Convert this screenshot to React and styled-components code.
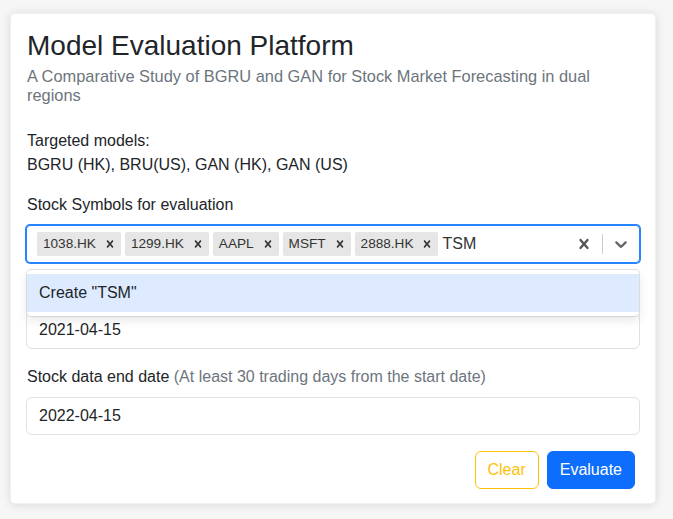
import React from "react";
import styled, { createGlobalStyle } from "styled-components";

const GlobalStyle = createGlobalStyle`
  html, body { margin: 0; padding: 0; }
  body {
    background: #f6f6f6;
    font-family: "Liberation Sans", Arial, sans-serif;
    color: #212529;
    font-size: 16px;
    line-height: 1.5;
  }
  * { box-sizing: border-box; }
`;

const Page = styled.div`
  padding: 13px 17px 15px 10px;
`;

const Card = styled.div`
  background: #fff;
  border-radius: 5px;
  border: 1px solid rgba(0, 0, 0, 0.06);
  box-shadow: 0 1px 10px rgba(0, 0, 0, 0.12);
  padding: 15px 15px 14px 15px;
`;

const Title = styled.h2`
  font-size: 28px;
  font-weight: 500;
  line-height: 1.2;
  margin: 0 0 8px 1px;
`;

const Subtitle = styled.h6`
  font-size: 16.4px;
  font-weight: 400;
  line-height: 1.2;
  color: #6c757d;
  margin: -4px 0 23px 1px;
`;

const Models = styled.div`
  margin: 0 0 16px 1px;
`;

const Field = styled.div`
  margin-bottom: 16px;
  position: relative;
`;

const Label = styled.label`
  display: block;
  margin: 0 0 8px 1px;
`;

const Hint = styled.span`
  color: #6c757d;
`;

const Control = styled.div`
  position: relative;
  display: flex;
  align-items: center;
  min-height: 38px;
  border: 1px solid #2684ff;
  box-shadow: 0 0 0 1px #2684ff;
  border-radius: 4px;
  background: #fff;
`;

const ValueContainer = styled.div`
  flex: 1;
  display: flex;
  flex-wrap: wrap;
  align-items: center;
  padding: 2px 8px;
`;

const Chip = styled.div`
  display: flex;
  margin: 2px;
  background: #e6e6e6;
  border-radius: 2px;
`;

const ChipLabel = styled.span`
  font-size: 13.6px;
  line-height: 18px;
  padding: 3px 3px 3px 6px;
  color: #333;
`;

const ChipRemove = styled.span`
  display: flex;
  align-items: center;
  padding: 0 4px;
  color: #333;
  border-radius: 2px;
`;

const TypedText = styled.span`
  margin: 2px;
  padding: 2px 0;
  color: #333;
  line-height: 20px;
`;

const Indicators = styled.div`
  display: flex;
  align-items: center;
  align-self: stretch;
`;

const Indicator = styled.div`
  display: flex;
  padding: 8px;
  color: ${(p) => p.$color || "#666"};
`;

const Separator = styled.span`
  align-self: stretch;
  width: 1px;
  background: #ccc;
  margin: 8px 0;
`;

const Menu = styled.div`
  position: absolute;
  top: 100%;
  left: 0;
  right: 0;
  margin-top: 8px;
  background: #fff;
  border-radius: 4px;
  box-shadow: 0 0 0 1px rgba(0, 0, 0, 0.1), 0 4px 11px rgba(0, 0, 0, 0.1);
  padding: 4px 0;
  z-index: 2;
`;

const Option = styled.div`
  padding: 8px 12px;
  line-height: 22px;
  background: ${(p) => (p.$focused ? "#deebff" : "transparent")};
  color: #212529;
`;

const Input = styled.input`
  display: block;
  width: 100%;
  padding: 6px 12px;
  font-family: inherit;
  font-size: 16px;
  line-height: 1.5;
  color: #212529;
  background: #fff;
  border: 1px solid #dee2e6;
  border-radius: 6px;
  outline: none;
`;

const Actions = styled.div`
  display: flex;
  justify-content: flex-end;
  gap: 8px;
  padding-right: 5px;
`;

const Button = styled.button`
  font-family: inherit;
  font-size: 16px;
  line-height: 1.5;
  padding: 6px 12px;
  border-radius: 6px;
  border: 1px solid ${(p) => (p.$variant === "primary" ? "#0d6efd" : "#ffc107")};
  background: ${(p) => (p.$variant === "primary" ? "#0d6efd" : "#fff")};
  color: ${(p) => (p.$variant === "primary" ? "#fff" : "#ffc107")};
`;

const CrossIcon = ({ size = 20 }) => (
  <svg width={size} height={size} viewBox="0 0 20 20" fill="currentColor" aria-hidden="true">
    <path d="M14.348 14.849c-0.469 0.469-1.229 0.469-1.697 0l-2.651-3.030-2.651 3.029c-0.469 0.469-1.229 0.469-1.697 0-0.469-0.469-0.469-1.229 0-1.697l2.758-3.15-2.759-3.152c-0.469-0.469-0.469-1.228 0-1.697s1.228-0.469 1.697 0l2.652 3.031 2.651-3.031c0.469-0.469 1.228-0.469 1.697 0s0.469 1.229 0 1.697l-2.758 3.152 2.758 3.15c0.469 0.469 0.469 1.229 0 1.698z" />
  </svg>
);

const ChevronIcon = () => (
  <svg width="20" height="20" viewBox="0 0 20 20" fill="currentColor" aria-hidden="true">
    <path d="M4.516 7.548c0.436-0.446 1.043-0.481 1.576 0l3.908 3.747 3.908-3.747c0.533-0.481 1.141-0.446 1.574 0 0.436 0.445 0.408 1.197 0 1.615-0.406 0.418-4.695 4.502-4.695 4.502-0.217 0.223-0.502 0.335-0.787 0.335s-0.57-0.112-0.789-0.335c0 0-4.287-4.084-4.695-4.502s-0.436-1.17 0-1.615z" />
  </svg>
);

const symbols = ["1038.HK", "1299.HK", "AAPL", "MSFT", "2888.HK"];

export default function App() {
  return (
    <>
      <GlobalStyle />
      <Page>
        <Card>
          <Title>Model Evaluation Platform</Title>
          <Subtitle>
            A Comparative Study of BGRU and GAN for Stock Market Forecasting in dual regions
          </Subtitle>
          <Models>
            <div>Targeted models:</div>
            <div>BGRU (HK), BRU(US), GAN (HK), GAN (US)</div>
          </Models>
          <Field>
            <Label>Stock Symbols for evaluation</Label>
            <Control>
              <ValueContainer>
                {symbols.map((s) => (
                  <Chip key={s}>
                    <ChipLabel>{s}</ChipLabel>
                    <ChipRemove>
                      <CrossIcon size={14} />
                    </ChipRemove>
                  </Chip>
                ))}
                <TypedText>TSM</TypedText>
              </ValueContainer>
              <Indicators>
                <Indicator $color="#555">
                  <CrossIcon />
                </Indicator>
                <Separator />
                <Indicator>
                  <ChevronIcon />
                </Indicator>
              </Indicators>
              <Menu>
                <Option $focused>Create "TSM"</Option>
              </Menu>
            </Control>
          </Field>
          <Field>
            <Label>Stock data start date</Label>
            <Input readOnly defaultValue="2021-04-15" />
          </Field>
          <Field>
            <Label>
              Stock data end date <Hint>(At least 30 trading days from the start date)</Hint>
            </Label>
            <Input readOnly defaultValue="2022-04-15" />
          </Field>
          <Actions>
            <Button $variant="warning">Clear</Button>
            <Button $variant="primary">Evaluate</Button>
          </Actions>
        </Card>
      </Page>
    </>
  );
}
